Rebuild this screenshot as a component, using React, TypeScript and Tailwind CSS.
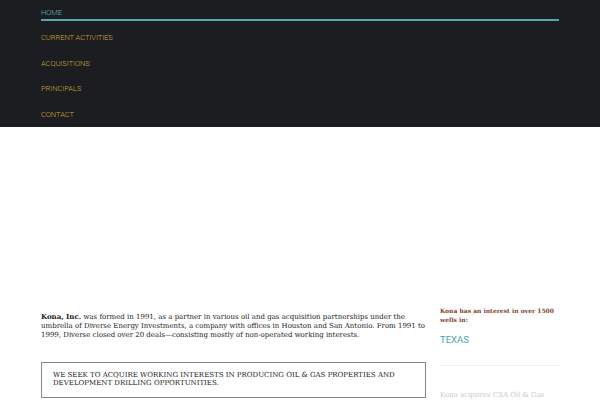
export default function App() {
  const nav = ['Home', 'Current Activities', 'Acquisitions', 'Principals', 'Contact'];

  return (
    <div className="min-h-[400px] w-[600px] overflow-hidden bg-white">
      <header className="h-[127px] bg-[#1c1d21] pt-[7px]">
        <nav className="mx-[41px] flex flex-col" style={{ fontFamily: 'Roboto, sans-serif' }}>
          {nav.map((item, i) => (
            <a
              key={item}
              className={`block h-[25.4px] text-[7.6px] font-light uppercase leading-[12px] tracking-[-0.1px] ${
                i === 0 ? 'text-[#5bb6bb]' : 'text-[#c8a33a]'
              }`}
            >
              {item}
              {i === 0 && <span className="block h-[2px] w-[518px] bg-[#4fa9ad]" />}
            </a>
          ))}
        </nav>
      </header>

      <div className="h-[185px]" />

      <main className="mx-[41px] flex gap-[14px]">
        <div className="w-[385px] shrink-0" style={{ fontFamily: '"DejaVu Serif", serif' }}>
          <p className="w-[392px] text-[7px] leading-[9px] text-[#222]">
            <b>Kona, Inc.</b> was formed in 1991, as a partner in various oil and gas acquisition partnerships under the
            <br />
            umbrella of Diverse Energy Investments, a company with offices in Houston and San Antonio. From 1991 to
            <br />
            1999, Diverse closed over 20 deals—consisting mostly of non-operated working interests.
          </p>
          <div className="mt-[22px] border border-[#888] px-[11px] pt-[8px] pb-[10px] text-[7px] leading-[8px] text-[#222]">
            WE SEEK TO ACQUIRE WORKING INTERESTS IN PRODUCING OIL &amp; GAS PROPERTIES AND
            DEVELOPMENT DRILLING OPPORTUNITIES.
          </div>
        </div>

        <aside className="w-[120px]">
          <p
            className="-mt-[6px] text-[6px] font-bold leading-[9px] text-[#8a3b1e]"
            style={{ fontFamily: '"DejaVu Serif", serif' }}
          >
            Kona has an interest in over 1500 wells in:
          </p>
          <p className="mt-[9px] text-[9.5px] text-[#4ea3a8]" style={{ fontFamily: 'Roboto, sans-serif' }}>
            TEXAS
          </p>
          <div className="mt-[18px] h-px w-[120px] bg-[#f0f0f0]" />
          <p className="mt-[24px] text-[7px] text-[#c9c6d6]" style={{ fontFamily: '"DejaVu Serif", serif' }}>
            Kona acquires CXA Oil &amp; Gas
          </p>
        </aside>
      </main>
    </div>
  );
}
